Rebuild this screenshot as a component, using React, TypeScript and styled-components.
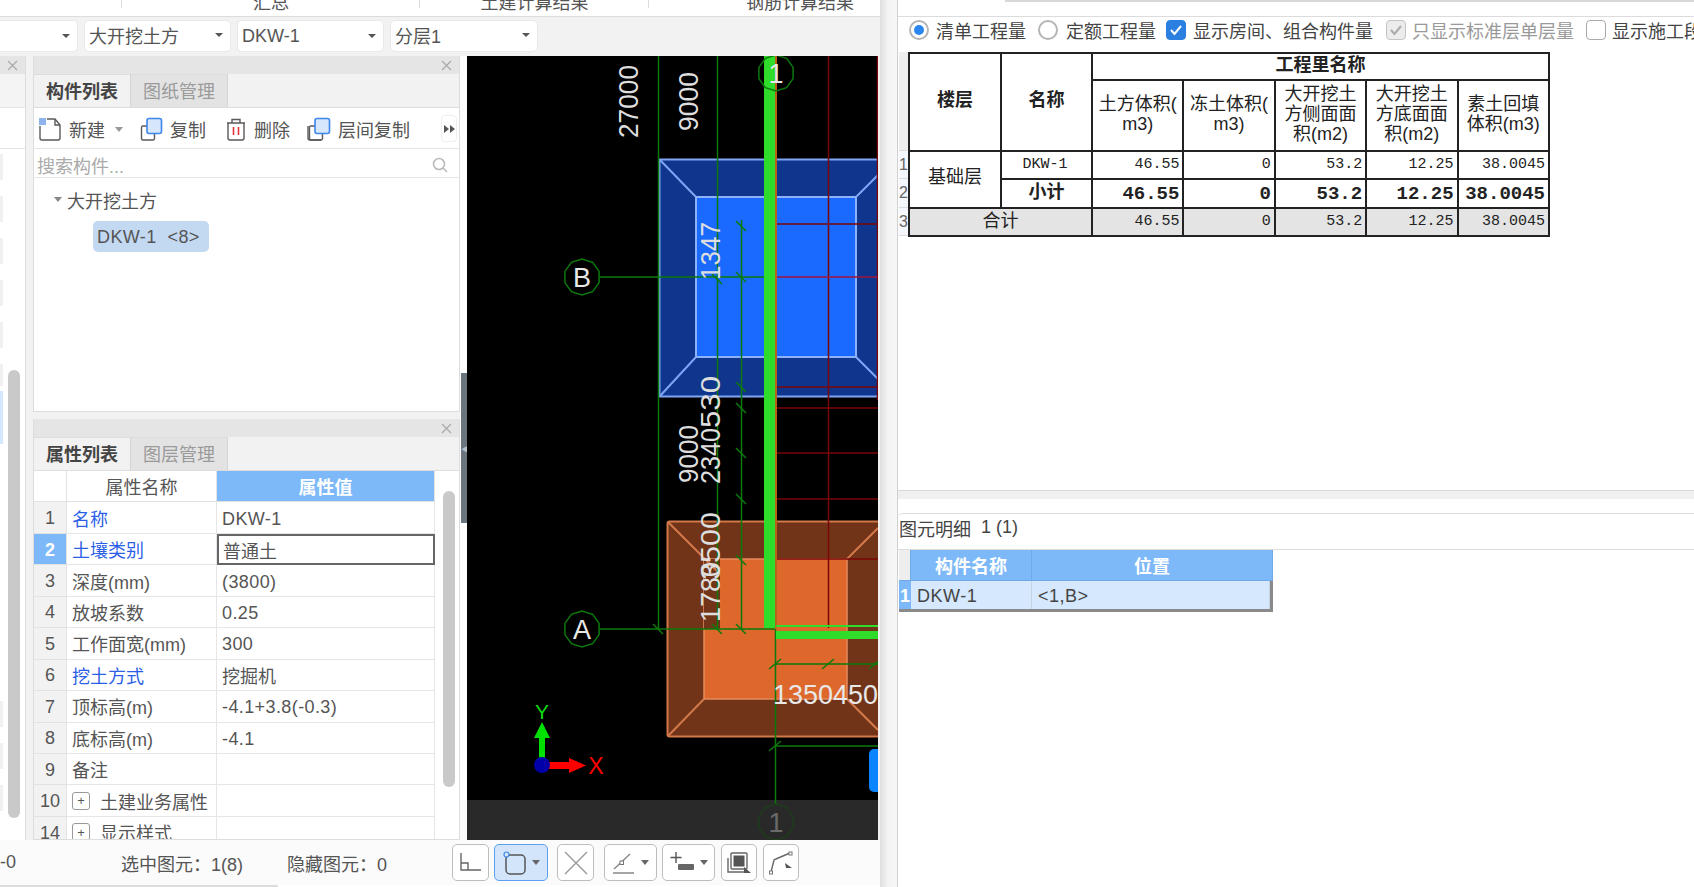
import React from "react";
import styled, { createGlobalStyle } from "styled-components";

const FONT = `"Liberation Sans", "Noto Sans CJK SC", sans-serif`;
const BLUE = "#7db9f8";

const Global = createGlobalStyle`
  html, body { margin: 0; padding: 0; background: #fff; overflow: hidden; }
  body { font-family: ${FONT}; font-size: 18px; color: #444; }
  * { box-sizing: border-box; }
`;

const Page = styled.div`display: flex; width: 1694px; height: 887px; overflow: hidden; background: #fff;`;
const LeftApp = styled.div`display: flex; flex-direction: column; width: 880px; flex: none; height: 887px; background: #fff;`;

const TopTabs = styled.div`display: flex; height: 17px; flex: none; overflow: hidden; align-items: flex-end; border-bottom: 1px solid #dcdcdc; background: #fff;`;
const TopTab = styled.div<{ $w: number }>`
  width: ${(p) => p.$w}px; flex: none; height: 26px; line-height: 26px; text-align: center; color: #555; position: relative; font-size: 18px;
  &::after { content: ""; position: absolute; right: 0; top: 0; bottom: 8px; width: 1px; background: #ddd; }
`;

const DropBar = styled.div`display: flex; gap: 6px; height: 37px; flex: none; padding-top: 3px; background: #f2f2f2; margin-left: -10px;`;
const Drop = styled.div<{ $w: number; $cjk?: boolean }>`
  width: ${(p) => p.$w}px; height: 32px; background: #fff; border: 1px solid #e9e9e9; border-radius: 5px; display: flex; align-items: center; padding: 0 7px ${(p) => (p.$cjk ? 2 : 0)}px 4px; font-size: 18px; color: #555;
  &::after { content: ""; margin-left: auto; border: 4px solid transparent; border-top: 4px solid #555; border-bottom: 0; }
`;

const Main = styled.div`display: flex; flex: 1; min-height: 0; padding-top: 2px; background: #f2f2f2;`;
const Mini = styled.div`width: 26px; flex: none; display: flex; flex-direction: column; border-right: 1px solid #ddd; background: #fff; position: relative; margin-right: 7px;`;
const PanelHead = styled.div`height: 18px; flex: none; background: #e5e5e5; display: flex; justify-content: flex-end; align-items: center; padding-right: 7px; color: #aaa;`;
const MiniBand = styled.div`height: 34px; flex: none; background: #f4f4f4; border-bottom: 1px solid #e5e5e5;`;
const MiniGap = styled.div`height: 41px; flex: none; border-bottom: 1px solid #e5e5e5;`;
const Stubs = styled.div`display: flex; flex-direction: column; padding-top: 5px; gap: 16px;`;
const Stub = styled.div<{ $on?: boolean; $h?: number; $gapTop?: number }>`
  width: 3px; height: ${(p) => p.$h ?? 26}px; background: ${(p) => (p.$on ? "#d5e8ff" : "#f0f0f0")}; margin-top: ${(p) => p.$gapTop ?? 0}px;
`;
const ScrollThumb = styled.div<{ $l: number; $t: number; $h: number }>`
  position: absolute; left: ${(p) => p.$l}px; top: ${(p) => p.$t}px; width: 12px; height: ${(p) => p.$h}px; background: #c9c9c9; border-radius: 6px;
`;

const Column = styled.div`width: 427px; flex: none; display: flex; flex-direction: column; gap: 7px; background: #f2f2f2;`;
const Panel = styled.div<{ $h: number }>`height: ${(p) => p.$h}px; flex: none; display: flex; flex-direction: column; background: #fff; border: 1px solid #ddd; border-top: 0; position: relative; overflow: hidden;`;
const TabRow = styled.div`height: 34px; flex: none; display: flex; background: #f2f2f2; border-bottom: 1px solid #ddd;`;
const Tab = styled.div<{ $on?: boolean }>`
  width: 97px; display: flex; align-items: center; justify-content: center; font-size: 18px; padding-bottom: 2px;
  font-weight: ${(p) => (p.$on ? 700 : 400)}; color: ${(p) => (p.$on ? "#444" : "#9a9a9a")};
  background: ${(p) => (p.$on ? "#f2f2f2" : "#e3e3e3")}; border-right: 1px solid #d4d4d4; border-top: 1px solid #ddd;
`;

const Tools = styled.div`height: 41px; flex: none; display: flex; align-items: center; padding: 2px 0 0 4px; border-bottom: 1px solid #e6e6e6; position: relative;`;
const Tool = styled.div<{ $w: number }>`width: ${(p) => p.$w}px; flex: none; display: flex; align-items: center; gap: 7px; font-size: 18px; color: #555; white-space: nowrap;`;
const MoreBtn = styled.div`position: absolute; right: 2px; top: 7px; width: 16px; height: 27px; border: 1px solid #eee; border-radius: 4px; display: flex; align-items: center; justify-content: center;`;
const Caret = styled.span<{ $c?: string }>`width: 0; height: 0; border: 4px solid transparent; border-top: 5px solid ${(p) => p.$c ?? "#999"}; border-bottom: 0; flex: none;`;
const ToolCaret = styled(Caret)`margin-left: 3px;`;
const Search = styled.div`height: 29px; flex: none; display: flex; align-items: center; justify-content: space-between; padding: 3px 11px 0 3px; color: #aaa; border-bottom: 1px solid #e6e6e6; font-size: 18px;`;
const Tree = styled.div`flex: 1; display: flex; flex-direction: column; padding-top: 8px;`;
const TreeRoot = styled.div`display: flex; align-items: center; gap: 5px; padding-left: 20px; height: 27px; color: #555;`;
const Chip = styled.div`margin: 8px 0 0 59px; width: 116px; height: 31px; line-height: 33px; background: #c3d9f2; border-radius: 5px; padding-left: 4px; color: #555; white-space: nowrap; letter-spacing: 0.4px;`;

const Grid = styled.div`flex: 1; overflow: hidden;`;
const Row = styled.div`display: grid; grid-template-columns: 33px 150px 218px; height: 31.45px; width: 401px;`;
const Cell = styled.div<{ $blue?: boolean; $focus?: boolean; $latin?: boolean }>`
  display: flex; align-items: center; padding: ${(p) => (p.$latin ? 3 : 0)}px 0 0 ${(p) => (p.$focus ? 4 : 5)}px; gap: 8px; white-space: nowrap; overflow: hidden;
  color: ${(p) => (p.$blue ? "#2d5fe6" : "#555")};
  letter-spacing: ${(p) => (p.$latin ? 0.4 : 0)}px;
  border-right: 1px solid #e6e6e6; border-bottom: 1px solid #e6e6e6;
  background: #fff; ${(p) => p.$focus && "border: 2px solid #666;"}
`;
const IndexCell = styled.div<{ $on?: boolean }>`
  display: flex; align-items: center; justify-content: center; padding-top: 2px; font-weight: ${(p) => (p.$on ? 700 : 400)};
  background: ${(p) => (p.$on ? BLUE : "#f2f2f2")}; color: ${(p) => (p.$on ? "#fff" : "#555")};
  border-right: 1px solid #e2e2e2; border-bottom: 1px solid #e2e2e2;
`;
const HeadCell = styled.div<{ $on?: boolean }>`
  display: flex; align-items: center; justify-content: center; font-weight: ${(p) => (p.$on ? 700 : 400)};
  background: ${(p) => (p.$on ? BLUE : "#fff")}; color: ${(p) => (p.$on ? "#fff" : "#555")};
  border-right: 1px solid #e2e2e2; border-bottom: 1px solid #e2e2e2;
`;
const PlusBox = styled.span`width: 18px; height: 18px; border: 1px solid #999; border-radius: 3px; display: inline-flex; align-items: center; justify-content: center; font-size: 13px; line-height: 1; flex: none; margin-right: 2px; color: #555;`;

const Splitter = styled.div`width: 7px; flex: none; display: flex; align-items: center; background: #fdfdfd; justify-content: flex-end;`;
const SplitHandle = styled.div`width: 6px; height: 150px; background: #6c757d; color: #b9c0c6; font-size: 8px; display: flex; align-items: center; overflow: hidden;`;

const Canvas = styled.div`flex: 1; margin-right: 2px; background: #000; position: relative; overflow: hidden;`;
const CanvasSvg = styled.svg`display: block; width: 411px; height: 784px;`;
const CanvasTab = styled.div`position: absolute; right: 0; top: 693px; width: 9px; height: 43px; background: #0a84ff; border-radius: 5px 0 0 5px;`;

const Status = styled.div`height: 45px; flex: none; display: flex; align-items: center; background: #fbfbfb; font-size: 18px; color: #555; white-space: nowrap;`;
const StatusText = styled.div<{ $w: number }>`width: ${(p) => p.$w}px; flex: none;`;
const Btn = styled.div<{ $w: number; $ml: number; $on?: boolean }>`
  width: ${(p) => p.$w}px; height: 37px; margin-left: ${(p) => p.$ml}px; flex: none; display: flex; align-items: center; justify-content: center; gap: 5px;
  border-radius: 5px; border: 1px solid ${(p) => (p.$on ? "#5a9ff0" : "#bdbdbd")}; background: ${(p) => (p.$on ? "#d3e5fb" : "#fff")};
`;
const BottomStrip = styled.div`height: 2px; flex: none; width: 278px; background: #dcdcdc;`;

const RightWin = styled.div`width: 814px; flex: none; display: flex; height: 887px;`;
const Gutter = styled.div`width: 18px; flex: none; background: linear-gradient(90deg, #dedede 0, #f4f4f4 8px, #f7f7f7 100%); border-right: 1px solid #cfcfcf;`;
const Content = styled.div`flex: 1; min-width: 0; display: flex; flex-direction: column; overflow: hidden; background: #fff;`;
const RTop = styled.div`height: 17px; flex: none; border-bottom: 1px solid #dcdcdc; padding-left: 107px;`;
const RTopLine = styled.div`height: 2px; background: #d8d8d8;`;
const Options = styled.div`height: 25px; flex: none; display: flex; align-items: center; padding-left: 11px; white-space: nowrap; font-size: 18px; color: #444;`;
const Opt = styled.div<{ $ml: number; $dim?: boolean; $gap?: number }>`display: flex; align-items: center; gap: ${(p) => p.$gap ?? 6}px; margin-left: ${(p) => p.$ml}px; flex: none; color: ${(p) => (p.$dim ? "#999" : "#444")};`;
const Radio = styled.span<{ $on?: boolean }>`
  width: 20px; height: 20px; border-radius: 50%; border: 2px solid #b5b5b5; display: inline-flex; align-items: center; justify-content: center; background: #fff;
  &::after { content: ""; width: 10px; height: 10px; border-radius: 50%; background: ${(p) => (p.$on ? "#2b86ee" : "transparent")}; }
`;
const Check = styled.span<{ $on?: boolean; $dim?: boolean }>`
  width: 20px; height: 20px; border-radius: 4px; display: inline-flex; align-items: center; justify-content: center;
  border: 1px solid ${(p) => (p.$on ? "#2b7fe0" : p.$dim ? "#c5c5c5" : "#aaa")};
  background: ${(p) => (p.$on ? "#2b7fe0" : p.$dim ? "#ececec" : "#fff")};
`;

const TableArea = styled.div`display: flex; height: 184px; flex: none; margin-top: 10px; padding-left: 1px;`;
const RowHead = styled.div`width: 9px; flex: none; display: flex; flex-direction: column; overflow: hidden; color: #666; font-size: 16px;`;
const RowHeadCell = styled.div<{ $h: number; $grey?: boolean }>`height: ${(p) => p.$h}px; flex: none; background: ${(p) => (p.$grey ? "#eee" : "#f4f7fb")}; border-bottom: 1px solid #ddd; display: flex; align-items: center; line-height: 1;`;
const Sheet = styled.table`width: 642px; table-layout: fixed; border-collapse: collapse; height: 184px; font-size: 18px; color: #222;`;
const Th = styled.th<{ $w?: number; $pb?: number }>`border: 2px solid #222; padding: 0 0 ${(p) => p.$pb ?? 0}px; font-weight: 700; line-height: 19px; ${(p) => p.$w && `width: ${p.$w}px;`}`;
const ThSub = styled(Th)`font-weight: 400; font-size: 18px; line-height: 20px; padding-bottom: 3px; white-space: nowrap;`;
const Td = styled.td<{ $bold?: boolean; $total?: boolean; $center?: boolean }>`
  border: 2px solid #222; padding: 0 3px 0 0; white-space: nowrap; overflow: hidden; line-height: 18px;
  font-family: "Liberation Mono", "Noto Sans CJK SC", monospace; font-size: ${(p) => (p.$bold ? 19 : 15)}px;
  text-align: ${(p) => (p.$center ? "center" : "right")};
  font-weight: ${(p) => (p.$bold ? 700 : 400)};
  background: ${(p) => (p.$total ? "#e4e4e4" : "#fff")};
`;
const TdCjk = styled(Td)<{ $pb: number }>`font-family: ${FONT}; font-size: 18px; padding: 0 0 ${(p) => p.$pb}px;`;

const Spacer = styled.div`flex: 1;`;
const HSplit = styled.div`height: 9px; flex: none; background: #f0f0f0; border-top: 1px solid #d9d9d9;`;
const Detail = styled.div`height: 374px; flex: none; margin-top: 14px; display: flex; flex-direction: column; border-top: 1px solid #dcdcdc; border-top-left-radius: 5px;`;
const DetailTitle = styled.div`height: 36px; flex: none; display: flex; align-items: center; gap: 10px; padding: 0 0 8px 1px; color: #444; border-bottom: 1px solid #dcdcdc;`;
const DetailHead = styled.div`display: grid; grid-template-columns: 12px 121px 241px; width: 374px; height: 31px; flex: none; margin-left: 1px;`;
const DetailRow = styled(DetailHead)`grid-template-columns: 12px 121px 238px; height: 31px; border-bottom: 3px solid #8a8a8a; border-right: 3px solid #8a8a8a;`;
const DHeadCell = styled.div<{ $blank?: boolean }>`
  display: flex; align-items: center; justify-content: center; font-weight: 700; color: #fff;
  background: ${(p) => (p.$blank ? "#eee" : BLUE)}; border-right: 1px solid #6fa9e8; border-bottom: 1px solid #6fa9e8;
`;
const DCell = styled.div`display: flex; align-items: center; padding: 2px 0 0 6px; background: #d5e8fd; color: #444; border-right: 1px solid #c5d3e2; white-space: nowrap; letter-spacing: 0.5px;`;
const DIndex = styled.div`display: flex; align-items: center; justify-content: center; padding-top: 2px; background: ${BLUE}; color: #fff; font-weight: 700;`;

const ICON = { fill: "none", stroke: "#5a5a5a", strokeWidth: 1.4 };

const NewIcon = () => (
  <svg width="24" height="24" viewBox="0 0 24 24">
    <path d="M2 9v12a2 2 0 0 0 2 2h16a2 2 0 0 0 2-2V8l-5-6H9" {...ICON} />
    <path d="M17 2v6h5" {...ICON} />
    <rect x="1" y="1" width="7" height="7" fill="#8fb4ee" />
  </svg>
);
const CopyIcon = ({ stack }: { stack?: boolean }) => (
  <svg width="24" height="24" viewBox="0 0 24 24">
    {stack && <path d="M1 9v12a2 2 0 0 0 2 2h11" {...ICON} />}
    <path d="M8 9H4a1.5 1.5 0 0 0-1.5 1.5v11A1.5 1.5 0 0 0 4 23h10a1.5 1.5 0 0 0 1.5-1.5V17" {...ICON} />
    <rect x="8" y="1.5" width="14.5" height="15" rx="2" fill="#d6e6fb" stroke="#3f86e8" strokeWidth="1.6" />
  </svg>
);
const TrashIcon = () => (
  <svg width="22" height="24" viewBox="0 0 22 24">
    <path d="M2 6h18M7 6V2.5h8V6M3 6v15a2 2 0 0 0 2 2h12a2 2 0 0 0 2-2V6" {...ICON} />
    <path d="M8.5 10v8M13.5 10v8" stroke="#e0353a" strokeWidth="1.6" />
  </svg>
);
const SearchIcon = () => (
  <svg width="16" height="16" viewBox="0 0 16 16">
    <circle cx="7" cy="7" r="5.5" fill="none" stroke="#bbb" strokeWidth="1.6" />
    <path d="M11 11l4 4" stroke="#bbb" strokeWidth="1.6" />
  </svg>
);
const CloseX = () => (
  <svg width="11" height="11" viewBox="0 0 11 11">
    <path d="M1 1l9 9M10 1l-9 9" stroke="#aaa" strokeWidth="1.3" />
  </svg>
);
const MoreIcon = () => (
  <svg width="11" height="8" viewBox="0 0 11 8">
    <path d="M0 0l5 4-5 4zM6 0l5 4-5 4z" fill="#555" />
  </svg>
);
const Tick = ({ color = "#fff", dim }: { color?: string; dim?: boolean }) => (
  <svg width="16" height="16" viewBox="0 0 16 16">
    <path d="M3 8l3.5 4L13 4" fill="none" stroke={dim ? "#aaa" : color} strokeWidth="2" />
  </svg>
);

const BS = { fill: "none", stroke: "#666", strokeWidth: 1.4 };
const OrthoIcon = () => (
  <svg width="24" height="24" viewBox="0 0 24 24"><path d="M2 2v17h20M2 12h7v7" {...BS} /></svg>
);
const RectIcon = () => (
  <svg width="24" height="24" viewBox="0 0 24 24">
    <rect x="3" y="4" width="19" height="19" rx="4" fill="none" stroke="#555" strokeWidth="1.5" />
    <circle cx="3.5" cy="3.5" r="2.5" fill="#d3e5fb" stroke="#3f86e8" strokeWidth="1.2" />
  </svg>
);
const CrossIcon = () => (
  <svg width="26" height="26" viewBox="0 0 26 26"><path d="M2 2l22 22M24 2L2 24" fill="none" stroke="#999" strokeWidth="1.4" /></svg>
);
const AngleIcon = () => (
  <svg width="24" height="24" viewBox="0 0 24 24">
    <path d="M1 22h21M2 18L18 3" {...BS} stroke="#888" />
    <rect x="8" y="10" width="3.5" height="3.5" fill="#fff" stroke="#777" />
  </svg>
);
const PlusBarIcon = () => (
  <svg width="26" height="24" viewBox="0 0 26 24">
    <path d="M7 1v11M1.5 6.5h11" stroke="#555" strokeWidth="1.4" />
    <rect x="9" y="13" width="16" height="6" fill="#666" rx="1" />
  </svg>
);
const LayerIcon = () => (
  <svg width="26" height="26" viewBox="0 0 26 26">
    <path d="M6 3h14a1 1 0 0 1 1 1v14a1 1 0 0 1-1 1H6a1 1 0 0 1-1-1V4a1 1 0 0 1 1-1z" {...BS} />
    <rect x="7.5" y="5.5" width="11" height="11" fill="#555" />
    <path d="M2 8v14h16" {...BS} />
    <path d="M18 17l7 6h-7z" fill="#555" />
  </svg>
);
const ArcIcon = () => (
  <svg width="26" height="26" viewBox="0 0 26 26">
    <path d="M3 22L6 10q1-1 2-1L22 3" {...BS} />
    <rect x="1.5" y="21" width="3" height="3" fill="#fff" stroke="#777" />
    <rect x="21" y="2" width="3" height="3" fill="#fff" stroke="#777" />
    <path d="M17 13l7 5h-6z" fill="#555" />
  </svg>
);

const GREEN = "#0b7a0b";
const RED = "#7a0606";

const ring = (cx: number, cy: number, r: number, n = 10) =>
  Array.from({ length: n }, (_, i) => {
    const a = (Math.PI * 2 * i) / n + Math.PI / 2;
    return `${(cx + r * Math.cos(a)).toFixed(1)},${(cy - r * Math.sin(a)).toFixed(1)}`;
  }).join(" ");

const VText = ({ x, y, len, children }: { x: number; y: number; len: number; children: string }) => (
  <text
    transform={`translate(${x} ${y}) rotate(-90)`}
    fontFamily='"Liberation Sans", sans-serif'
    fontSize="28"
    fill="#dedede"
    textLength={len}
    lengthAdjust="spacingAndGlyphs"
  >
    {children}
  </text>
);

const TICKS_A: [number, number][] = [
  [741, 226], [741, 277], [717, 279], [741, 387], [741, 408], [741, 453], [741, 499], [741, 560], [741, 629], [717, 629], [658, 629],
];
const TICKS_B: [number, number][] = [
  [775, 664], [828, 664], [875, 664], [775, 746],
];

const Drawing = () => (
  <CanvasSvg viewBox="467 56 411 784">
    <rect x="467" y="800" width="411" height="40" fill="#292929" />

    {/* blue pit */}
    <rect x="659.5" y="159.5" width="225" height="237" fill="#0f358c" stroke="#7ea6f5" strokeWidth="2" />
    <rect x="696" y="197" width="160" height="160" fill="#1a6aff" stroke="#8db2fa" strokeWidth="2" />
    <path d="M660 160L696 197M660 396L696 357M856 197L878 175M856 357L878 379" stroke="#7ea6f5" strokeWidth="2" fill="none" />

    {/* orange pit */}
    <rect x="667.5" y="521.5" width="225" height="215" rx="2" fill="#713419" stroke="#d2794a" strokeWidth="2" />
    <rect x="704" y="559" width="143" height="140" fill="#de672c" stroke="#e58a5c" strokeWidth="1.5" />
    <rect x="704" y="559" width="16" height="70" fill="#713419" />
    <path d="M668 522L718 572M668 736L704 699M847 559L878 528M847 699L878 730" stroke="#d2794a" strokeWidth="2" fill="none" />

    {/* red grid */}
    <path d="M777 224H878M777 387H878M777 408H878M777 453H878M777 499H878M777 559H878" stroke={RED} strokeWidth="1.5" fill="none" />
    <path d="M828.5 56V628M877.5 56V400" stroke={RED} strokeWidth="1.5" fill="none" />
    <path d="M777 277H878" stroke="#a0143c" strokeWidth="1.5" />

    {/* green thin */}
    <path d="M658.5 56V629M717.5 56V629M741.5 220V629" stroke={GREEN} strokeWidth="1.5" fill="none" />
    <path d="M600 277H775M600 629H775M775.5 629V807M776 664H878M776 746H878" stroke={GREEN} strokeWidth="1.5" fill="none" />
    {TICKS_A.map(([x, y]) => (
      <line key={`${x}-${y}`} x1={x - 5} y1={y - 5} x2={x + 5} y2={y + 5} stroke={GREEN} strokeWidth="1.5" />
    ))}
    {TICKS_B.map(([x, y]) => (
      <line key={`${x}-${y}`} x1={x - 6} y1={y + 5} x2={x + 6} y2={y - 5} stroke={GREEN} strokeWidth="1.5" />
    ))}

    {/* wall */}
    <rect x="764" y="56" width="11" height="572" fill="#2fdc2a" />
    <rect x="775" y="56" width="2" height="572" fill="#b8621a" />
    <rect x="776" y="625" width="102" height="2" fill="#2fdc2a" />
    <rect x="776" y="631" width="102" height="8" fill="#2fdc2a" />

    {/* dimensions */}
    <VText x={638} y={138} len={73}>27000</VText>
    <VText x={698} y={131} len={59}>9000</VText>
    <VText x={720} y={280} len={58}>1347</VText>
    <VText x={720} y={428} len={52}>530</VText>
    <VText x={720} y={484} len={56}>2340</VText>
    <VText x={698} y={483} len={58}>9000</VText>
    <VText x={720} y={622} len={60}>1780</VText>
    <VText x={720} y={580} len={68}>3500</VText>
    <text x="773" y="704" fontFamily='"Liberation Sans", sans-serif' fontSize="28" fill="#e8e8e8" textLength="105" lengthAdjust="spacingAndGlyphs">1350450</text>

    {/* axis bubbles */}
    <polygon points={ring(776, 73, 18)} fill="none" stroke={GREEN} strokeWidth="1.5" />
    <text x="776" y="83" textAnchor="middle" fontFamily='"Liberation Sans", sans-serif' fontSize="27" fill="#e8e8e8">1</text>
    <polygon points={ring(582, 277, 18)} fill="#000" stroke={GREEN} strokeWidth="1.5" />
    <text x="582" y="287" textAnchor="middle" fontFamily='"Liberation Sans", sans-serif' fontSize="27" fill="#e8e8e8">B</text>
    <polygon points={ring(582, 629, 18)} fill="#000" stroke={GREEN} strokeWidth="1.5" />
    <text x="582" y="639" textAnchor="middle" fontFamily='"Liberation Sans", sans-serif' fontSize="27" fill="#e8e8e8">A</text>
    <polygon points={ring(776, 822, 18)} fill="#292929" stroke="#1d3d1d" strokeWidth="1.5" />
    <text x="776" y="832" textAnchor="middle" fontFamily='"Liberation Sans", sans-serif' fontSize="27" fill="#6a6a6a">1</text>

    {/* coordinate gizmo */}
    <text x="542" y="719" textAnchor="middle" fontFamily='"Liberation Sans", sans-serif' fontSize="21" fill="#11d811">Y</text>
    <rect x="539" y="736" width="6" height="24" fill="#00e000" />
    <path d="M542 722l8 16h-16z" fill="#00e000" />
    <rect x="548" y="762" width="24" height="7" fill="#ff0000" />
    <path d="M586 765.5l-17 7.5v-15z" fill="#ff0000" />
    <circle cx="542" cy="765" r="8" fill="#0000a8" />
    <text x="596" y="774" textAnchor="middle" fontFamily='"Liberation Sans", sans-serif' fontSize="23" fill="#ff0000">X</text>
  </CanvasSvg>
);

type Prop = { n: string; name: string; value?: string; blue?: boolean; plus?: boolean; on?: boolean };
const PROPS: Prop[] = [
  { n: "1", name: "名称", value: "DKW-1", blue: true },
  { n: "2", name: "土壤类别", value: "普通土", blue: true, on: true },
  { n: "3", name: "深度(mm)", value: "(3800)" },
  { n: "4", name: "放坡系数", value: "0.25" },
  { n: "5", name: "工作面宽(mm)", value: "300" },
  { n: "6", name: "挖土方式", value: "挖掘机", blue: true },
  { n: "7", name: "顶标高(m)", value: "-4.1+3.8(-0.3)" },
  { n: "8", name: "底标高(m)", value: "-4.1" },
  { n: "9", name: "备注" },
  { n: "10", name: "土建业务属性", plus: true },
  { n: "14", name: "显示样式", plus: true },
];

const COLS = ["46.55", "0", "53.2", "12.25", "38.0045"];
const isLatin = (s?: string) => !!s && !/[\u4e00-\u9fff]/.test(s);

export default function App() {
  return (
    <Page>
      <Global />
      <LeftApp>
        <TopTabs>
          <TopTab $w={122} />
          <TopTab $w={298}>汇总</TopTab>
          <TopTab $w={229}>土建计算结果</TopTab>
          <TopTab $w={302}>钢筋计算结果</TopTab>
        </TopTabs>
        <DropBar>
          <Drop $w={88} />
          <Drop $w={147} $cjk>大开挖土方</Drop>
          <Drop $w={147}>DKW-1</Drop>
          <Drop $w={148} $cjk>分层1</Drop>
        </DropBar>
        <Main>
          <Mini>
            <PanelHead><CloseX /></PanelHead>
            <MiniBand />
            <MiniGap />
            <Stubs>
              <Stub $h={26} />
              <Stub $h={26} />
              <Stub $h={26} />
              <Stub $h={26} />
              <Stub $h={26} />
              <Stub $h={22} />
              <Stub $on $h={53} $gapTop={-11} />
              <Stub $h={26} $gapTop={241} />
              <Stub $h={26} />
              <Stub $h={26} />
            </Stubs>
            <ScrollThumb $l={8} $t={314} $h={448} />
          </Mini>
          <Column>
            <Panel $h={356}>
              <PanelHead><CloseX /></PanelHead>
              <TabRow>
                <Tab $on>构件列表</Tab>
                <Tab>图纸管理</Tab>
              </TabRow>
              <Tools>
                <Tool $w={101}>
                  <NewIcon />
                  新建
                  <ToolCaret />
                </Tool>
                <Tool $w={86}>
                  <CopyIcon />
                  复制
                </Tool>
                <Tool $w={82}>
                  <TrashIcon />
                  删除
                </Tool>
                <Tool $w={110}>
                  <CopyIcon stack />
                  层间复制
                </Tool>
                <MoreBtn><MoreIcon /></MoreBtn>
              </Tools>
              <Search>
                搜索构件...
                <SearchIcon />
              </Search>
              <Tree>
                <TreeRoot>
                  <Caret $c="#888" />
                  大开挖土方
                </TreeRoot>
                <Chip>DKW-1&nbsp;&nbsp;&lt;8&gt;</Chip>
              </Tree>
            </Panel>
            <Panel $h={421}>
              <PanelHead><CloseX /></PanelHead>
              <TabRow>
                <Tab $on>属性列表</Tab>
                <Tab>图层管理</Tab>
              </TabRow>
              <Grid>
                <Row>
                  <HeadCell />
                  <HeadCell>属性名称</HeadCell>
                  <HeadCell $on>属性值</HeadCell>
                </Row>
                {PROPS.map((p) => (
                  <Row key={p.n}>
                    <IndexCell $on={p.on}>{p.n}</IndexCell>
                    <Cell $blue={p.blue}>
                      {p.plus && <PlusBox>+</PlusBox>}
                      {p.name}
                    </Cell>
                    <Cell $focus={p.on} $latin={isLatin(p.value)}>{p.value}</Cell>
                  </Row>
                ))}
              </Grid>
              <ScrollThumb $l={409} $t={72} $h={296} />
            </Panel>
          </Column>
          <Splitter>
            <SplitHandle>◀</SplitHandle>
          </Splitter>
          <Canvas>
            <Drawing />
            <CanvasTab />
          </Canvas>
        </Main>
        <Status>
          <StatusText $w={121}>-0</StatusText>
          <StatusText $w={166}>选中图元：1(8)</StatusText>
          <StatusText $w={165}>隐藏图元：0</StatusText>
          <Btn $w={37} $ml={0}><OrthoIcon /></Btn>
          <Btn $w={54} $ml={5} $on><RectIcon /><Caret $c="#666" /></Btn>
          <Btn $w={37} $ml={9}><CrossIcon /></Btn>
          <Btn $w={53} $ml={10}><AngleIcon /><Caret $c="#666" /></Btn>
          <Btn $w={53} $ml={5}><PlusBarIcon /><Caret $c="#666" /></Btn>
          <Btn $w={36} $ml={6}><LayerIcon /></Btn>
          <Btn $w={36} $ml={6}><ArcIcon /></Btn>
        </Status>
        <BottomStrip />
      </LeftApp>
      <RightWin>
        <Gutter />
        <Content>
          <RTop><RTopLine /></RTop>
          <Options>
            <Opt $ml={0} $gap={7}><Radio $on />清单工程量</Opt>
            <Opt $ml={12} $gap={8}><Radio />定额工程量</Opt>
            <Opt $ml={10} $gap={7}><Check $on><Tick /></Check>显示房间、组合构件量</Opt>
            <Opt $ml={13} $dim><Check $dim><Tick dim /></Check>只显示标准层单层量</Opt>
            <Opt $ml={12}><Check />显示施工段</Opt>
          </Options>
          <TableArea>
            <RowHead>
              <RowHeadCell $h={99} $grey />
              <RowHeadCell $h={28}>1</RowHeadCell>
              <RowHeadCell $h={29}>2</RowHeadCell>
              <RowHeadCell $h={28}>3</RowHeadCell>
            </RowHead>
            <Sheet>
              <tbody>
                <tr style={{ height: 27 }}>
                  <Th rowSpan={2} $w={92} $pb={4}>楼层</Th>
                  <Th rowSpan={2} $w={91} $pb={4}>名称</Th>
                  <Th colSpan={5} $pb={2}>工程里名称</Th>
                </tr>
                <tr style={{ height: 71 }}>
                  <ThSub>土方体积(<br />m3)</ThSub>
                  <ThSub>冻土体积(<br />m3)</ThSub>
                  <ThSub>大开挖土<br />方侧面面<br />积(m2)</ThSub>
                  <ThSub>大开挖土<br />方底面面<br />积(m2)</ThSub>
                  <ThSub>素土回填<br />体积(m3)</ThSub>
                </tr>
                <tr style={{ height: 28 }}>
                  <TdCjk rowSpan={2} $center $pb={6}>基础层</TdCjk>
                  <Td $center>DKW-1</Td>
                  {COLS.map((c, i) => <Td key={i}>{c}</Td>)}
                </tr>
                <tr style={{ height: 29 }}>
                  <TdCjk $center $bold $pb={3}>小计</TdCjk>
                  {COLS.map((c, i) => <Td key={i} $bold>{c}</Td>)}
                </tr>
                <tr style={{ height: 28 }}>
                  <TdCjk colSpan={2} $center $total $pb={2}>合计</TdCjk>
                  {COLS.map((c, i) => <Td key={i} $total>{c}</Td>)}
                </tr>
              </tbody>
            </Sheet>
          </TableArea>
          <Spacer />
          <HSplit />
          <Detail>
            <DetailTitle>
              图元明细
              <span>1 (1)</span>
            </DetailTitle>
            <DetailHead>
              <DHeadCell $blank />
              <DHeadCell>构件名称</DHeadCell>
              <DHeadCell>位置</DHeadCell>
            </DetailHead>
            <DetailRow>
              <DIndex>1</DIndex>
              <DCell>DKW-1</DCell>
              <DCell>&lt;1,B&gt;</DCell>
            </DetailRow>
          </Detail>
        </Content>
      </RightWin>
    </Page>
  );
}
